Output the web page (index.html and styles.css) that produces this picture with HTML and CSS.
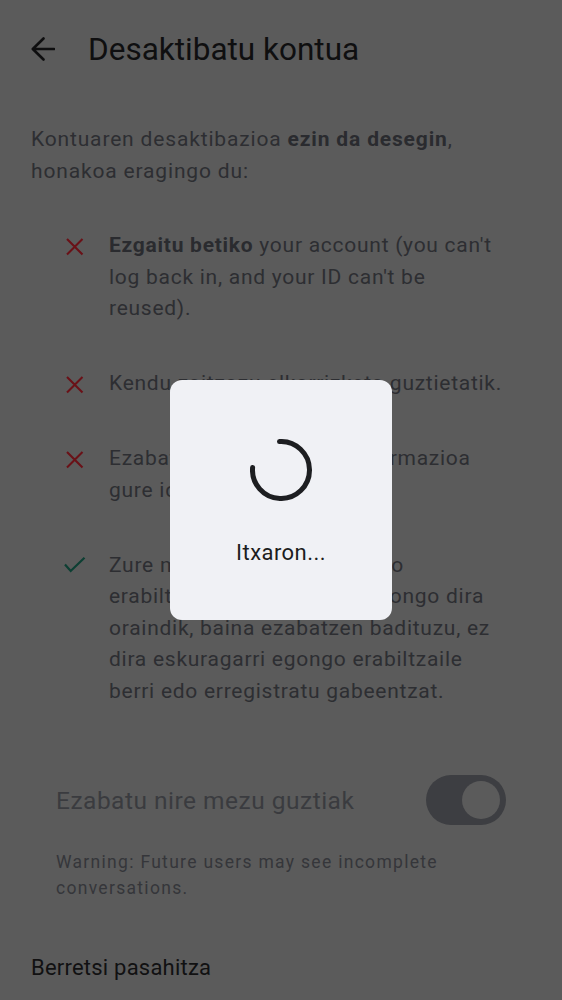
FILE: index.html
```html
<!DOCTYPE html>
<html lang="eu">
<head>
<meta charset="utf-8">
<title>Desaktibatu kontua</title>
<link rel="stylesheet" href="styles.css">
</head>
<body>
<div class="page">
  <header class="toolbar">
    <svg class="back" viewBox="0 0 24 24" aria-hidden="true">
      <path d="M23 12H2 M12.5 1.5L1.8 12L12.5 22.5" fill="none" stroke="#0e0e0f" stroke-width="2.6" stroke-linecap="round" stroke-linejoin="round"/>
    </svg>
    <h1 class="title">Desaktibatu kontua</h1>
  </header>

  <p class="intro">Kontuaren desaktibazioa <b>ezin da desegin</b>,<br>honakoa eragingo du:</p>

  <ul class="effects">
    <li class="effect">
      <span class="effect-icon"><svg viewBox="0 0 24 24"><path class="cross" d="M5 5L20.5 20.5M20.5 5L5 20.5"/></svg></span>
      <span class="effect-text"><b>Ezgaitu betiko</b> your account (you can't<br>log back in, and your ID can't be<br>reused).</span>
    </li>
    <li class="effect">
      <span class="effect-icon"><svg viewBox="0 0 24 24"><path class="cross" d="M5 5L20.5 20.5M20.5 5L5 20.5"/></svg></span>
      <span class="effect-text">Kendu zaitzazu elkarrizketa guztietatik.</span>
    </li>
    <li class="effect">
      <span class="effect-icon"><svg viewBox="0 0 24 24"><path class="cross" d="M5 5L20.5 20.5M20.5 5L5 20.5"/></svg></span>
      <span class="effect-text">Ezabatu zure kontuaren informazioa<br>gure identitate zerbitzutik.</span>
    </li>
    <li class="effect">
      <span class="effect-icon"><svg viewBox="0 0 24 24"><path class="check" d="M3 11.5L8.7 18L22.5 4.8"/></svg></span>
      <span class="effect-text">Zure mezuak erregistratutako<br>erabiltzaileentzat ikusgai egongo dira<br>oraindik, baina ezabatzen badituzu, ez<br>dira eskuragarri egongo erabiltzaile<br>berri edo erregistratu gabeentzat.</span>
    </li>
  </ul>

  <div class="toggle-row">
    <span class="toggle-label">Ezabatu nire mezu guztiak</span>
    <span class="switch"><span class="thumb"></span></span>
  </div>

  <p class="warning">Warning: Future users may see incomplete<br>conversations.</p>

  <p class="confirm">Berretsi pasahitza</p>
</div>

<div class="overlay">
  <div class="dialog">
    <svg class="spinner" viewBox="0 0 62 62" aria-hidden="true">
      <path d="M29.5 2.54A28.5 28.5 0 1 1 2.61 28.5" fill="none" stroke="#1d1e21" stroke-width="5" stroke-linecap="round"/>
    </svg>
    <div class="dialog-text">Itxaron...</div>
  </div>
</div>
</body>
</html>
```

FILE: styles.css
```css
html, body {
  margin: 0;
  padding: 0;
}

body {
  background: #5b5b5b;
  font-family: Roboto, "Noto Sans", sans-serif;
  width: 562px;
  height: 1000px;
  overflow: hidden;
}

.page {
  width: 562px;
}

.toolbar {
  height: 98px;
  display: flex;
  align-items: center;
  padding-left: 31px;
}

.back {
  width: 24px;
  height: 24px;
  flex: none;
}

.title {
  margin: 0 0 0 33px;
  font-size: 31.5px;
  font-weight: 400;
  color: #0f0f10;
}

.intro {
  margin: 26px 31px 0;
  font-size: 21px;
  line-height: 31.5px;
  color: #2d2e32;
  letter-spacing: 0.04em;
}

.intro b,
.effect-text b {
  font-weight: 700;
  color: #2a2b2f;
}

.effects {
  list-style: none;
  margin: 43px 0 0;
  padding: 0 20px 0 62px;
  display: flex;
  flex-direction: column;
  gap: 43.5px;
}

.effect {
  display: flex;
  gap: 23px;
  font-size: 21px;
  line-height: 31.5px;
  color: #2d2e32;
  letter-spacing: 0.035em;
}

.effect-icon {
  width: 24px;
  height: 31.5px;
  flex: none;
  display: flex;
  align-items: center;
  justify-content: center;
}

.effect-icon svg {
  width: 24px;
  height: 24px;
}

.cross {
  fill: none;
  stroke: #6a1117;
  stroke-width: 2.1;
}

.check {
  fill: none;
  stroke: #0d3f33;
  stroke-width: 2.2;
}

.effect-text {
  white-space: nowrap;
}

.toggle-row {
  margin-top: 68px;
  padding: 0 56px;
  height: 50px;
  display: flex;
  align-items: center;
  justify-content: space-between;
}

.toggle-label {
  font-size: 24.5px;
  color: #3a3b3f;
  letter-spacing: 0.02em;
}

.switch {
  width: 80px;
  height: 50px;
  border-radius: 25px;
  background: #3d3e42;
  display: flex;
  align-items: center;
  justify-content: flex-end;
  padding-right: 6px;
  box-sizing: border-box;
}

.thumb {
  width: 38px;
  height: 38px;
  border-radius: 50%;
  background: #5b5b5b;
}

.warning {
  margin: 24px 56px 0;
  font-size: 17.5px;
  line-height: 26px;
  color: #35363a;
  letter-spacing: 1.3px;
}

.confirm {
  margin: 51px 31px 0;
  font-size: 22px;
  line-height: 31.5px;
  color: #111112;
  letter-spacing: 0.01em;
}

.overlay {
  position: fixed;
  inset: 0;
  display: flex;
  align-items: center;
  justify-content: center;
}

.dialog {
  width: 222px;
  height: 240px;
  box-sizing: border-box;
  padding-top: 59px;
  background: #f0f1f5;
  border-radius: 12px;
  display: flex;
  flex-direction: column;
  align-items: center;
}

.spinner {
  width: 62px;
  height: 62px;
  flex: none;
}

.dialog-text {
  margin-top: 36px;
  font-size: 22px;
  line-height: 31.5px;
  color: #1c1d20;
  letter-spacing: 0.02em;
}
```
